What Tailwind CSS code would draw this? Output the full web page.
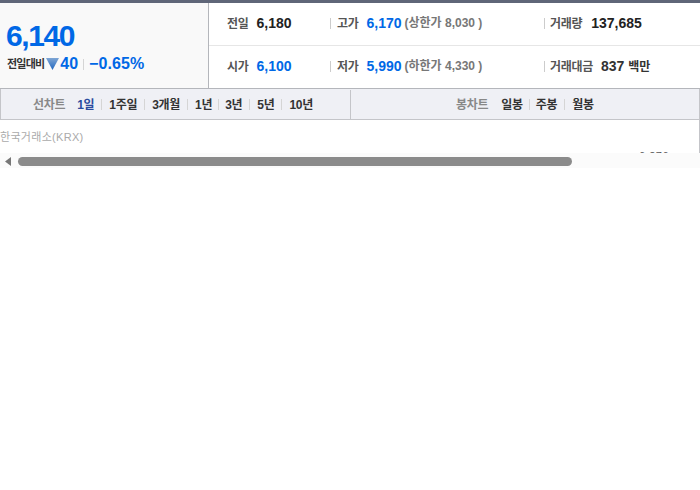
<!DOCTYPE html>
<html lang="ko">

<head>
    <meta charset="UTF-8">
    <title>차트</title>
    <script src="https://cdn.jsdelivr.net/npm/@tailwindcss/browser@4"></script>
</head>

<body class="bg-white overflow-hidden font-['Liberation_Sans','Noto_Sans_CJK_KR',sans-serif]">
    <div class="w-[700px] h-[490px] relative">
        <!-- price summary -->
        <div class="flex h-[89px] border-t-[3px] border-t-[#5f6678] border-b border-b-[#b4b6bb]">
            <div class="w-[209px] shrink-0 bg-[#f9f9f9] border-r border-r-[#b4b6bb] pl-[6px] pt-[16px]">
                <div class="text-[#0068e6] text-[30px] leading-[34px] font-bold tracking-[-1.4px]">6,140</div>
                <div class="flex items-center h-[20px] mt-[1px]">
                    <span class="text-[11px] text-[#333] font-bold tracking-[-0.8px] ml-[1px]">전일대비</span>
                    <svg class="ml-[2px]" width="13" height="12" viewBox="0 0 13 12">
                        <defs>
                            <linearGradient id="down" x1="0" y1="0" x2="0" y2="1">
                                <stop offset="0" stop-color="#7fa6d4" />
                                <stop offset="1" stop-color="#1f66c0" />
                            </linearGradient>
                        </defs>
                        <path d="M0 0h13L6.500 12z" fill="url(#down)" />
                    </svg>
                    <span class="text-[#0068e6] text-[16px] font-bold ml-[1px]">40</span>
                    <span class="w-px h-[11px] bg-[#d5d5d5] ml-[5px] mr-[5px]"></span>
                    <span class="text-[#0068e6] text-[16px] font-bold tracking-[0.1px]">−0.65%</span>
                </div>
            </div>
            <div class="flex-1 flex flex-col">
                <div class="h-[43px] pb-[2px] flex items-center border-b border-b-[#e6e6e6] text-[14px] font-bold">
                    <div class="w-[121px] pl-[18px] flex items-center gap-[8px]"><span class="pt-[1px] text-[#555] text-[12px] font-bold tracking-[-0.3px]">전일</span><span class="text-[#222]">6,180</span></div>
                    <div class="w-[214px] flex items-center gap-[7px]"><i class="w-px h-[11px] bg-[#ccc]"></i><span class="pt-[1px] -ml-[1px] mr-[1px] text-[#555] text-[12px] font-bold tracking-[-0.3px]">고가</span><span class="text-[#0068e6]">6,170</span><span class="-ml-[4px] text-[#777] text-[12px] font-bold">(상한가 8,030 )</span></div>
                    <div class="flex items-center gap-[7px]"><i class="w-px h-[11px] bg-[#ccc]"></i><span class="pt-[1px] -ml-[2px] mr-[2px] text-[#555] text-[12px] font-bold tracking-[-0.3px]">거래량</span><span class="text-[#222]">137,685</span></div>
                </div>
                <div class="flex-1 pb-[2px] flex items-center text-[14px] font-bold">
                    <div class="w-[121px] pl-[18px] flex items-center gap-[8px]"><span class="pt-[1px] text-[#555] text-[12px] font-bold tracking-[-0.3px]">시가</span><span class="text-[#0068e6]">6,100</span></div>
                    <div class="w-[214px] flex items-center gap-[7px]"><i class="w-px h-[11px] bg-[#ccc]"></i><span class="pt-[1px] -ml-[1px] mr-[1px] text-[#555] text-[12px] font-bold tracking-[-0.3px]">저가</span><span class="text-[#0068e6]">5,990</span><span class="-ml-[4px] text-[#777] text-[12px] font-bold">(하한가 4,330 )</span></div>
                    <div class="flex items-center gap-[7px]"><i class="w-px h-[11px] bg-[#ccc]"></i><span class="pt-[1px] -ml-[2px] text-[#555] text-[12px] font-bold tracking-[-0.3px]">거래대금</span><span class="ml-[1px] text-[#333]">837 <span class="text-[12px]">백만</span></span></div>
                </div>
            </div>
        </div>

        <!-- chart tabs -->
        <div class="flex h-[31px] pt-[1px] bg-[#eff0f5] border-x border-b border-[#c4c5c9] text-[12px] font-bold text-[#333] tracking-[-0.3px]">
            <div class="w-[350px] shrink-0 border-r border-r-[#c4c5c9] flex items-center pl-[32px]">
                <span class="text-[#888] mr-[12px]">선차트</span>
                <span class="text-[#2b4a9e]">1일</span><i class="w-px h-[11px] bg-[#d5d5d5] mx-[7px]"></i>
                <span>1주일</span><i class="w-px h-[11px] bg-[#d5d5d5] mx-[7px]"></i>
                <span>3개월</span><i class="w-px h-[11px] bg-[#d5d5d5] mx-[7px]"></i>
                <span>1년</span><i class="w-px h-[11px] bg-[#d5d5d5] mx-[6px]"></i>
                <span>3년</span><i class="w-px h-[11px] bg-[#d5d5d5] mx-[7px]"></i>
                <span>5년</span><i class="w-px h-[11px] bg-[#d5d5d5] mx-[7px]"></i>
                <span>10년</span>
            </div>
            <div class="flex-1 flex items-center pl-[105px]">
                <span class="text-[#888] mr-[13px]">봉차트</span>
                <span>일봉</span><i class="w-px h-[11px] bg-[#d5d5d5] mx-[6px]"></i>
                <span>주봉</span><i class="w-px h-[11px] bg-[#d5d5d5] mx-[7px]"></i>
                <span>월봉</span>
            </div>
        </div>

        <!-- chart stub -->
        <div class="h-[33px] relative border-r border-r-[#c4c5c9]">
            <div class="text-[11px] text-[#aaa] pt-[9px] tracking-[0.3px]">한국거래소(KRX)</div>
            <div class="absolute right-[30px] top-[31px] text-[11px] leading-[10px] tracking-[0.5px] text-[#555]">6,276</div>
        </div>

        <!-- scrollbar -->
        <div class="relative h-[15px] bg-[#fbfbfb]">
            <svg class="absolute left-[5px] top-[4px]" width="6" height="9" viewBox="0 0 6 9"><path d="M6 0v9L0 4.500z" fill="#777" /></svg>
            <div class="absolute left-[18px] top-[4px] w-[554px] h-[9px] rounded-full bg-[#8b8b8b]"></div>
        </div>
    </div>
</body>

</html>
